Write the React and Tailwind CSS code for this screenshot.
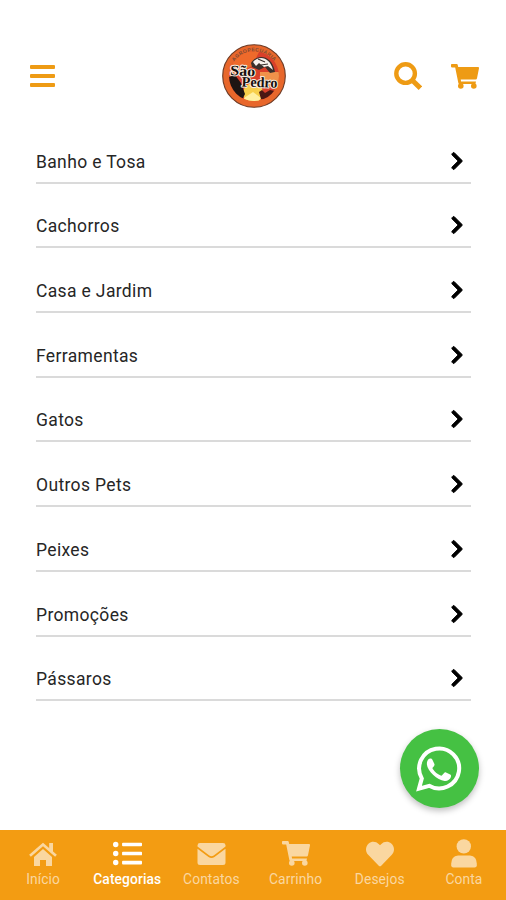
import { useState } from 'react'
import { FaListUl, FaHeart, FaChevronRight } from 'react-icons/fa'

const CATEGORIES = [
  'Banho e Tosa', 'Cachorros', 'Casa e Jardim', 'Ferramentas', 'Gatos',
  'Outros Pets', 'Peixes', 'Promoções', 'Pássaros',
]

function HomeIcon({ className }) {
  return (
    <svg viewBox="0 0 28 24" fill="currentColor" className={className}>
      <path d="M14 7L23 15V24H17V18H11V24H5V15Z" />
      <path d="M1 13.8L14 2.4L27 13.8" fill="none" stroke="currentColor" strokeWidth="2.6" />
      <path d="M20.2 1H24V11L20.2 7.6Z" />
    </svg>
  )
}

function MailIcon({ className }) {
  return (
    <svg viewBox="0 0 28 22" fill="currentColor" className={className}>
      <path d="M2.5 0H25.5Q28 0 28 2.4V3.6L16.2 12.4Q14 14 11.8 12.4L0 3.6V2.4Q0 0 2.5 0Z" />
      <path d="M0 5.8L11 14Q14 16.2 17 14L28 5.8V19.5Q28 22 25.5 22H2.5Q0 22 0 19.5Z" />
    </svg>
  )
}

function CartIcon({ className }) {
  return (
    <svg viewBox="0 0 28 25" fill="currentColor" className={className}>
      <path d="M0.8 0H5.8Q6.5 0 6.7 0.8L7.2 3H27Q28.2 3 28 4.2L26 14.2Q25.8 15.4 24.6 15.4H9.7L10.1 17.4H25L24.4 20H8.3Q7.6 20 7.4 19.2L4.2 3.4H0.8Q0 3.4 0 2.6V0.8Q0 0 0.8 0Z" />
      <circle cx="9.8" cy="22" r="2.8" />
      <circle cx="22.8" cy="22" r="2.8" />
    </svg>
  )
}

function UserIcon({ className }) {
  return (
    <svg viewBox="0 0 26 29" fill="currentColor" className={className}>
      <circle cx="12.8" cy="7.4" r="7.2" />
      <path d="M7 16.4H19Q25.8 17.2 25.8 24.6V26.2Q25.8 28.4 23.6 28.4H2.4Q0.2 28.4 0.2 26.2V24.6Q0.2 17.2 7 16.4Z" />
    </svg>
  )
}

function SearchIcon({ className }) {
  return (
    <svg viewBox="0 0 28 28" fill="none" stroke="currentColor" className={className}>
      <circle cx="11.6" cy="11.6" r="9.3" strokeWidth="4.4" />
      <path d="M18 18L26.4 26.2" strokeWidth="5" />
    </svg>
  )
}

function WhatsappIcon({ className }) {
  return (
    <svg viewBox="0 0 46 46" fill="none" stroke="currentColor" className={className}>
      <path d="M3 42.6L5.8 32.4A20 20 0 1 1 13.2 39.8Z" strokeWidth="4" />
      <path
        fill="currentColor"
        stroke="none"
        d="M12.2 13.6C13.3 12.2 15.6 12 16.4 13.7L18.4 18C18.8 19.1 18.2 19.9 16.8 21.5C16.3 22.1 16.5 22.6 17 23.3C19 26.2 21.3 28.1 24.6 29.5C25.3 29.8 25.8 29.7 26.3 29.1L28.1 26.9C28.7 26.2 29.3 26.2 30 26.5L34.2 28.6C35.1 29 35.2 29.6 34.9 31C34.4 33.6 31.2 35.2 28.6 34.9C24.8 34.4 20.7 32.2 17.3 28.9C13.9 25.6 11.1 21.7 10.9 18.4C10.8 16.5 11.2 14.8 12.2 13.6Z"
      />
    </svg>
  )
}

const TABS = [
  { label: 'Início', icon: HomeIcon, size: 'w-[28px] h-[24px]' },
  { label: 'Categorias', icon: FaListUl, size: 'w-[29px] h-[29px]' },
  { label: 'Contatos', icon: MailIcon, size: 'w-[29px] h-[22px]' },
  { label: 'Carrinho', icon: CartIcon, size: 'w-[28px] h-[25px]' },
  { label: 'Desejos', icon: FaHeart, size: 'w-[28px] h-[28px]' },
  { label: 'Conta', icon: UserIcon, size: 'w-[26px] h-[29px]' },
]

function Logo() {
  return (
    <svg viewBox="0 0 64 64" className="w-16 h-16">
      <defs>
        <clipPath id="badge"><circle cx="32" cy="32" r="25" /></clipPath>
        <path id="arc" d="M10.5 20 A24.5 24.5 0 0 1 54.5 22" />
      </defs>
      <circle cx="32" cy="32" r="31.3" fill="#e8672b" stroke="#6b3a25" strokeWidth="1.1" />
      <g clipPath="url(#badge)">
        <rect width="64" height="64" fill="#d9402a" />
        <path d="M4 6H38L30 22L8 34Z" fill="#ee6a2b" />
        <path d="M38 28H60V42H38Z" fill="#f0924a" />
        <ellipse cx="31" cy="49" rx="10" ry="10" fill="#f7cf4a" />
        <path d="M22 54L31 48L39 54L34 60H23Z" fill="#fff0a0" />
        {/* animal silhouettes */}
        <path d="M7 33L13 31L19 39L23 50L20 56L8 54Z" fill="#1d1513" />
        <path d="M37 48L40 46L43 49L48 46L57 48L48 56L39 55Z" fill="#4a1813" />
        <path d="M29 19C34 10 50 10 53 28L48 29L43 23L37 26L30 23Z" fill="#3a302c" />
        <path d="M31 18C37 11 48 13 51 26L46 22L42 23L37 19L34 22Z" fill="#f7f1ec" />
        <path d="M36 15L43 18M39 21L46 20" stroke="#39302d" strokeWidth="1.2" />
      </g>
      <text fill="#7d4a33" fontSize="5" fontWeight="700" fontFamily="Liberation Sans, sans-serif">
        <textPath href="#arc" startOffset="3" textLength="46">AGROPECUÁRIA</textPath>
      </text>
      <g fontFamily="'Liberation Serif', serif" fontWeight="700" fill="#17100e" stroke="#f7ece0" strokeWidth="2" paintOrder="stroke" strokeLinejoin="round">
        <text x="8" y="31" fontSize="14.5" textLength="25" lengthAdjust="spacingAndGlyphs" transform="rotate(3 8 31)">São</text>
        <text x="19.5" y="42.5" fontSize="14.5" textLength="36" lengthAdjust="spacingAndGlyphs" transform="rotate(2 20 42)">Pedro</text>
      </g>
    </svg>
  )
}

function CategoryRow({ name }) {
  return (
    <li className="flex h-[64.7px] items-end justify-between border-b-2 border-[#dadada] pb-[9px]">
      <span className="text-[17.5px] leading-[22px] tracking-[0.35px] text-[#262626]">{name}</span>
      <FaChevronRight className="mr-[4px] mb-[2px] w-[20px] h-[20px] stroke-black [stroke-width:24px] text-black" />
    </li>
  )
}

export default function App() {
  const [active, setActive] = useState('Categorias')

  return (
    <div className="relative flex h-[900px] w-[506px] flex-col overflow-hidden bg-white font-['Roboto',sans-serif]">
      <header className="grid h-[119px] shrink-0 grid-cols-3 items-center pt-[33px] pr-[27px] pl-[30px] text-[#ee9b14]">
        <button className="flex w-[25px] flex-col gap-[5px]" aria-label="Menu">
          <span className="h-[4px] rounded-[1px] bg-current" />
          <span className="h-[4px] rounded-[1px] bg-current" />
          <span className="h-[4px] rounded-[1px] bg-current" />
        </button>
        <div className="flex justify-center"><Logo /></div>
        <div className="flex items-center justify-end gap-[29px]">
          <SearchIcon className="w-[28px] h-[28px]" />
          <CartIcon className="w-[28px] h-[25px]" />
        </div>
      </header>

      <ul className="mr-[35px] ml-[36px] flex-1">
        {CATEGORIES.map((name) => <CategoryRow key={name} name={name} />)}
      </ul>

      {/* floating chat button */}
      <button className="absolute top-[729px] left-[399.5px] flex h-[79px] w-[79px] items-center justify-center rounded-full bg-[#45c143] text-white shadow-[0_3px_6px_rgba(0,0,0,0.25)]" aria-label="WhatsApp">
        <WhatsappIcon className="w-[46px] h-[46px]" />
      </button>

      <nav className="grid h-[70px] shrink-0 grid-cols-6 bg-[#f39c12] pl-px">
        {TABS.map(({ label, icon: Icon, size }) => (
          <button
            key={label}
            onClick={() => setActive(label)}
            className={`flex flex-col items-center pt-[9px] ${active === label ? 'font-medium text-white' : 'text-[#fad7a0]'}`}
          >
            <span className="flex h-[29px] items-center"><Icon className={size} /></span>
            <span className="mt-[2px] text-[13.8px] leading-[18px] tracking-[0.1px]">{label}</span>
          </button>
        ))}
      </nav>
    </div>
  )
}
